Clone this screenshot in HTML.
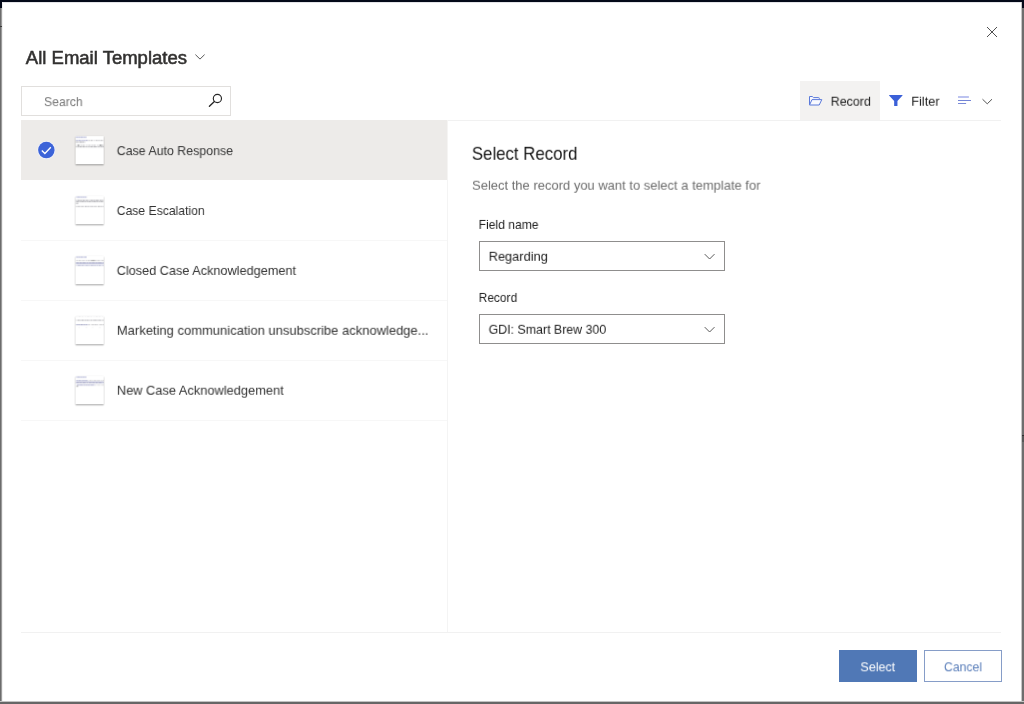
<!DOCTYPE html>
<html lang="en">
<head>
<meta charset="utf-8">
<title>All Email Templates</title>
<style>
*{box-sizing:border-box;margin:0;padding:0}
html,body{width:1024px;height:704px;overflow:hidden;background:#fff}
body{position:relative;font-family:"Liberation Sans",sans-serif;color:#323130;-webkit-font-smoothing:antialiased}
.abs{position:absolute}
.t{position:absolute;white-space:nowrap;line-height:20px;height:20px;font-size:13px;color:#333;will-change:transform;transform-origin:0 50%}
/* window frame */
#f-top{left:0;top:0;width:1024px;height:2px;background:#040919}
#f-top2{left:0;top:2px;width:1024px;height:1px;background:#e4e4e8}
#f-l{left:0;top:0;width:1px;height:704px;background:#6c6c6c}
#f-l2{left:1px;top:0;width:1px;height:704px;background:#9c9c9c}
#f-l3{left:2px;top:0;width:1px;height:704px;background:#f1f1f1}
#f-lt{left:0;top:0;width:2px;height:8px;background:#040919}
#f-r{left:1022px;top:0;width:2px;height:704px;background:#6e6e6e}
#f-r2{left:1021px;top:0;width:1px;height:704px;background:#c6c6c6}
#f-rt{left:1022px;top:0;width:2px;height:8px;background:#040919}
#f-b{left:0;top:702px;width:1024px;height:2px;background:#666}
#f-b2{left:0;top:701px;width:1024px;height:1px;background:#c2c2c2}
/* lines */
.hl{position:absolute;height:1px;background:#f1f1f1}
/* rows */
.row{position:absolute;left:21px;width:426px;height:60px}
.thumb{position:absolute;left:76px;width:28px;height:28px;background:#fff;box-shadow:0 1.1px 1.3px rgba(0,0,0,.36),0 0 1.2px rgba(0,0,0,.10);will-change:transform;transform:translate(-0.4px,0.15px)}
</style>
</head>
<body>

<!-- header -->
<div class="t" id="title" style="left:25px;top:46px;font-size:18px;line-height:24px;height:24px;color:#323130;-webkit-text-stroke:0.55px #323130;transform:translate(0.87px,0.40px) scaleX(1.0280)">All Email Templates</div>
<svg class="abs" style="left:194px;top:52px" width="12" height="10" viewBox="0 0 12 10"><path d="M1.4 2.6 L6 7.1 L10.6 2.6" fill="none" stroke="#5a5a5a" stroke-width="1"/></svg>
<svg class="abs" style="left:984px;top:24px" width="16" height="16" viewBox="0 0 16 16"><path d="M3 3 L13 13 M13 3 L3 13" fill="none" stroke="#505050" stroke-width="1"/></svg>

<!-- search -->
<div class="abs" style="left:21px;top:86px;width:210px;height:30px;border:1px solid #e1dfdd;background:#fff"></div>
<div class="t" id="search" style="left:43px;top:92px;color:#767676;transform:translate(0.98px,0.10px) scaleX(0.9378)">Search</div>
<svg class="abs" style="left:206px;top:92px" width="18" height="18" viewBox="0 0 18 18"><circle cx="11.4" cy="6.45" r="4.1" fill="none" stroke="#262626" stroke-width="1.15"/><path d="M8.4 9.5 L3.4 14.2" fill="none" stroke="#262626" stroke-width="1.35" stroke-linecap="round"/></svg>

<!-- toolbar -->
<div class="abs" style="left:800px;top:81px;width:80px;height:39px;background:#f3f2f1"></div>
<svg class="abs" style="left:807px;top:94px" width="16" height="14" viewBox="0 0 16 14"><path d="M2.5 11 V2.5 H5.3 L6.5 3.6 H11.6 Q12.3 3.6 12.3 4.4 V5.5" fill="#f7f8fe" stroke="#5b7ada" stroke-width="1" stroke-linejoin="round"/><path d="M2.5 11 L5 5.6 H14.8 L12.2 11 Z" fill="#f9faff" stroke="#5b7ada" stroke-width="1" stroke-linejoin="round"/></svg>
<div class="t" id="tb-record" style="left:830px;top:91px;color:#1d1d1d;transform:translate(0.70px,0.70px) scaleX(0.9586)">Record</div>
<svg class="abs" style="left:888px;top:94px" width="16" height="14" viewBox="0 0 16 14"><path d="M1.1 1 H14.5 V1.5 L9.45 7 V12.1 H6.15 V7 L1.1 1.5 Z" fill="#3b60d8"/></svg>
<div class="t" id="tb-filter" style="left:911px;top:91px;color:#1d1d1d;transform:translate(0.24px,0.70px) scaleX(0.9808)">Filter</div>
<svg class="abs" style="left:956px;top:94px" width="18" height="12" viewBox="0 0 18 12"><path d="M2 3H12.9" stroke="#8f9be6" stroke-width="1.2"/><path d="M2 6.5H15" stroke="#7384d6"/><path d="M2 9.5H10.1" stroke="#7a8ad8"/></svg>
<svg class="abs" style="left:981px;top:96px" width="13" height="10" viewBox="0 0 13 10"><path d="M1.5 3.2 L6.25 7.8 L11 3.2" fill="none" stroke="#555" stroke-width="1"/></svg>

<div class="hl" style="left:21px;top:120px;width:980px"></div>

<!-- list rows -->
<div class="row" style="top:120px;background:#edebe9;height:60px"></div>
<div class="abs" style="left:447px;top:120px;width:1px;height:60px;background:#f5f4f3"></div>
<div class="hl" style="left:21px;top:240px;width:426px;background:#f7f7f7"></div>
<div class="hl" style="left:21px;top:300px;width:426px;background:#f7f7f7"></div>
<div class="hl" style="left:21px;top:360px;width:426px;background:#f7f7f7"></div>
<div class="hl" style="left:21px;top:420px;width:426px;background:#f7f7f7"></div>
<div class="abs" style="left:447px;top:180px;width:1px;height:453px;background:#f4f4f4"></div>

<!-- check -->
<svg class="abs" style="left:36px;top:140px" width="21" height="21" viewBox="0 0 21 21"><circle cx="10.35" cy="10.05" r="9.1" fill="#f1f3fd"/><circle cx="10.35" cy="10.05" r="8.25" fill="#3c63d8"/><path d="M5.8 10.5 L8.9 13.5 L14.8 7.3" fill="none" stroke="#fff" stroke-width="1.35"/></svg>

<!-- thumbnails -->
<svg class="thumb" style="top:136px" width="28" height="28" viewBox="0 0 28 28"><path d="M0.3 1.1H10.8" stroke="#5a5fa8" stroke-opacity="0.55" stroke-dasharray="2.2 .3 1.6 .3 2.4 .3 1.5 .3"/><path d="M0.3 4.3H12" stroke="#5b5f9e" stroke-opacity="0.5" stroke-dasharray="1.8 .4 2.6 .4 1.4 .4"/><path d="M12.6 4.3H28" stroke="#55555f" stroke-opacity="0.38" stroke-dasharray="1.5 .7 2.2 .8 .9 1.1 2 .6"/><path d="M0.3 6H9.4" stroke="#55555f" stroke-opacity="0.5" stroke-dasharray="1.5 .5 .8 .6 2.6 .3"/><path d="M0.5 9.1H28" stroke="#55555f" stroke-opacity="0.33" stroke-dasharray=".8 .5 2 .9 1.4 .5 2.6 1 .6 .6"/><path d="M2.2 9.1H3.4" stroke="#333" stroke-opacity="0.6" stroke-dasharray="2"/><path d="M24 9.1H26.4" stroke="#333" stroke-opacity="0.55" stroke-dasharray="1 .3 1.1"/><path d="M0.3 10.7H28" stroke="#55555f" stroke-opacity="0.48" stroke-dasharray="1 .5 1.4 .4 2.4 .5 3 .6 1.2 .4"/></svg>
<svg class="thumb" style="top:196px" width="28" height="28" viewBox="0 0 28 28"><path d="M0.5 1.0H11.2" stroke="#5a5fa8" stroke-opacity="0.5" stroke-dasharray="1.2 .3 2.5 .3 1.6 .3 2 .3"/><path d="M0.4 4.2H28" stroke="#55555f" stroke-opacity="0.5" stroke-dasharray=".6 .5 2.4 .4 1.7 .5 3 .7 2 .4 1 .4"/><path d="M0.4 5.6H28" stroke="#55555f" stroke-opacity="0.42" stroke-dasharray="2.8 .4 1.2 .5 3.2 .4 1.6 .6 .9 .4"/><path d="M0.4 7.2H2.6" stroke="#55555f" stroke-opacity="0.45" stroke-dasharray="2.2"/><path d="M0.4 10.3H28" stroke="#55555f" stroke-opacity="0.4" stroke-dasharray="1.2 .6 2.2 .5 .8 .5 1.8 .9 2.6 .5 1 .5"/></svg>
<svg class="thumb" style="top:256px" width="28" height="28" viewBox="0 0 28 28"><path d="M0.5 1.0H11" stroke="#5a5fa8" stroke-opacity="0.5" stroke-dasharray="2.2 .3 1.4 .3 2.6 .3 1 .3"/><path d="M0.6 4.4H28" stroke="#55555f" stroke-opacity="0.3" stroke-dasharray="1.4 .6 2.6 .5 1 .5 2 .8"/><path d="M15.5 4.4H19.5" stroke="#444" stroke-opacity="0.35" stroke-dasharray="4"/><path d="M0.3 6.8H28" stroke="#555a92" stroke-opacity="0.6" stroke-dasharray="3 .3 2.4 .3 4.2 .4 1.8 .5 2.6 .3"/><path d="M0.3 7.7H28" stroke="#6a6fae" stroke-opacity="0.3" stroke-dasharray="28"/><path d="M0.5 9.3H28" stroke="#5b5f9e" stroke-opacity="0.42" stroke-dasharray=".8 .6 3.4 .4 2.2 .5 1.2 .5 2.6 .4"/></svg>
<svg class="thumb" style="top:316px" width="28" height="28" viewBox="0 0 28 28"><path d="M0.5 0.2H28" stroke="#55555f" stroke-opacity="0.12" stroke-dasharray="1 1.2 2.4 1 1.6 1.4"/><path d="M0.6 4.1H28" stroke="#55555f" stroke-opacity="0.45" stroke-dasharray=".7 .7 1.8 .5 .8 .5 2.6 .6 1.3 .5 2.1 .5"/><path d="M0.5 8.6H12.5" stroke="#555a92" stroke-opacity="0.55" stroke-dasharray="1.4 .4 2 .4 2.8 .4"/><path d="M13 8.6H28" stroke="#55555f" stroke-opacity="0.38" stroke-dasharray="1 .8 .6 .9 1.6 .7 2 .5"/><path d="M3 11.4H28" stroke="#55555f" stroke-opacity="0.08" stroke-dasharray="1 6 1.5 5"/></svg>
<svg class="thumb" style="top:376px" width="28" height="28" viewBox="0 0 28 28"><path d="M0.5 1.0H11" stroke="#5a5fa8" stroke-opacity="0.5" stroke-dasharray="1.2 .3 2.4 .3 1.6 .3 2.2 .3"/><path d="M0.6 4.4H12" stroke="#5b5f9e" stroke-opacity="0.45" stroke-dasharray="1.8 .3 2.6 .3 1.2 .3"/><path d="M12.5 4.4H28" stroke="#55555f" stroke-opacity="0.3" stroke-dasharray=".8 .7 1.6 .8 1 .9 2 .6"/><path d="M0.4 5.4H28" stroke="#6a6fae" stroke-opacity="0.28" stroke-dasharray="28"/><path d="M0.4 6.7H28" stroke="#555a92" stroke-opacity="0.55" stroke-dasharray="3.4 .3 2.2 .3 4 .4 1.6 .5 2.8 .3"/><path d="M1.2 8.9H19.5" stroke="#5b5f9e" stroke-opacity="0.48" stroke-dasharray="2.6 .3 3.2 .4 1.6 .3 2.2 .3"/><path d="M20.5 8.9H28" stroke="#55555f" stroke-opacity="0.25" stroke-dasharray="1 .8 1.6 .7"/><path d="M0.8 10.1H2.4" stroke="#444" stroke-opacity="0.5" stroke-dasharray="2"/></svg>

<!-- row labels -->
<div class="t" id="r1" style="left:116px;top:141px;transform:translate(0.77px,0.10px) scaleX(0.9513)">Case Auto Response</div>
<div class="t" id="r2" style="left:116px;top:201px;transform:translate(0.76px,0.00px) scaleX(0.9352)">Case Escalation</div>
<div class="t" id="r3" style="left:116px;top:260px;transform:translate(0.72px,0.90px) scaleX(0.9764)">Closed Case Acknowledgement</div>
<div class="t" id="r4" style="left:116px;top:320px;transform:translate(0.82px,0.80px) scaleX(0.9986)">Marketing communication unsubscribe acknowledge...</div>
<div class="t" id="r5" style="left:116px;top:380px;transform:translate(0.84px,0.70px) scaleX(0.9865)">New Case Acknowledgement</div>

<!-- right panel -->
<div class="t" id="p-title" style="left:471px;top:140px;font-size:18.5px;line-height:26px;height:26px;color:#161616;transform:translate(0.83px,0.80px) scaleX(0.9083)">Select Record</div>
<div class="t" id="p-sub" style="left:472px;top:175px;color:#6e6e6e;transform:translate(0.04px,0.70px) scaleX(0.9979)">Select the record you want to select a template for</div>
<div class="t" id="p-l1" style="left:478px;top:214px;color:#1d1d1d;transform:translate(0.62px,0.90px) scaleX(0.9324)">Field name</div>
<div class="abs" style="left:479px;top:241px;width:246px;height:30px;border:1px solid #8f8e8d;background:#fff"></div>
<div class="t" id="p-v1" style="left:488px;top:246px;color:#1d1d1d;transform:translate(0.65px,0.80px) scaleX(0.9864)">Regarding</div>
<svg class="abs" style="left:703px;top:251px" width="14" height="11" viewBox="0 0 14 11"><path d="M1.7 3.1 L6.6 8 L11.5 3.1" fill="none" stroke="#5a5a5a" stroke-width="1"/></svg>
<div class="t" id="p-l2" style="left:478px;top:287px;color:#1d1d1d;transform:translate(0.65px,0.90px) scaleX(0.9199)">Record</div>
<div class="abs" style="left:479px;top:314px;width:246px;height:30px;border:1px solid #8f8e8d;background:#fff"></div>
<div class="t" id="p-v2" style="left:488px;top:319px;color:#1d1d1d;transform:translate(0.61px,0.80px) scaleX(0.9525)">GDI: Smart Brew 300</div>
<svg class="abs" style="left:703px;top:324px" width="14" height="11" viewBox="0 0 14 11"><path d="M1.7 3.1 L6.6 8 L11.5 3.1" fill="none" stroke="#5a5a5a" stroke-width="1"/></svg>

<!-- footer -->
<div class="hl" style="left:21px;top:632px;width:980px"></div>
<div class="abs" style="left:839px;top:650px;width:78px;height:32px;background:#5078b6"></div>
<div class="t" id="b-select" style="left:860px;top:657px;color:#fff;transform:translate(0.38px,0.30px) scaleX(0.9633)">Select</div>
<div class="abs" style="left:924px;top:650px;width:78px;height:32px;border:1px solid #869dc8;background:#fff"></div>
<div class="t" id="b-cancel" style="left:943px;top:657px;color:#5b7fba;transform:translate(0.95px,0.30px) scaleX(0.9422)">Cancel</div>

<!-- frame -->
<div class="abs" id="f-top2"></div>
<div class="abs" id="f-l3"></div>
<div class="abs" id="f-l2"></div>
<div class="abs" id="f-l"></div>
<div class="abs" id="f-r2"></div>
<div class="abs" id="f-r"></div>
<div class="abs" id="f-b2"></div>
<div class="abs" id="f-b"></div>
<div class="abs" id="f-top"></div>
<div class="abs" id="f-lt"></div>
<div class="abs" id="f-rt"></div>
<div class="abs" style="left:1022px;top:435px;width:2px;height:1px;background:#2e2e2e"></div>
<div class="abs" style="left:1022px;top:436px;width:2px;height:6px;background:#575757"></div>
<div class="abs" style="left:0;top:26px;width:2px;height:1px;background:#3a3a3a"></div>
</body>
</html>
